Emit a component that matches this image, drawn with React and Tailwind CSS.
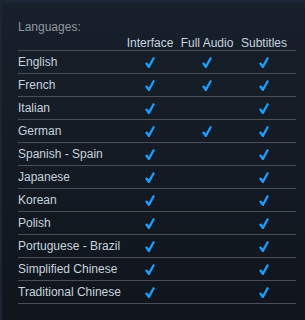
const languages = [
  { name: 'English', ui: true, audio: true, subs: true },
  { name: 'French', ui: true, audio: true, subs: true },
  { name: 'Italian', ui: true, audio: false, subs: true },
  { name: 'German', ui: true, audio: true, subs: true },
  { name: 'Spanish - Spain', ui: true, audio: false, subs: true },
  { name: 'Japanese', ui: true, audio: false, subs: true },
  { name: 'Korean', ui: true, audio: false, subs: true },
  { name: 'Polish', ui: true, audio: false, subs: true },
  { name: 'Portuguese - Brazil', ui: true, audio: false, subs: true },
  { name: 'Simplified Chinese', ui: true, audio: false, subs: true },
  { name: 'Traditional Chinese', ui: true, audio: false, subs: true },
];

function Check({ on }) {
  return (
    <div className="flex items-center justify-center">
      {on && (
        <svg width="10" height="11" viewBox="0 0 10 11" className="mt-[1px]">
          <polygon points="0,6.6 1.9,5.2 3.8,7.4 8.1,0 10,1.1 4.6,11 3.2,11" fill="#1a9fff" />
        </svg>
      )}
    </div>
  );
}

export default function App() {
  return (
    <div className="w-[305px] h-[320px] bg-[#1b2533] pt-[3px] pl-[2px] font-['Liberation_Sans',Arial,sans-serif] text-[12px]">
      <div className="h-full bg-gradient-to-b from-[#17202b] to-[#10151c] pt-[17px] pl-[16px] pr-[9px]">
        <div className="text-[#8f98a0] leading-[14px] h-[14px]">Languages:</div>
        <div className="grid grid-cols-[102px_60px_54px_60px] leading-[14px] mt-[2px] text-[#c6d4df] border-b border-[#4a4f55]">
          <div />
          <div className="text-center">Interface</div>
          <div className="text-center">Full Audio</div>
          <div className="text-center">Subtitles</div>
        </div>
        {languages.map((lang) => (
          <div
            key={lang.name}
            className="grid grid-cols-[102px_60px_54px_60px] h-[23px] items-center text-[#c6d4df] border-b border-[#4a4f55]"
          >
            <div className="whitespace-nowrap">{lang.name}</div>
            <Check on={lang.ui} />
            <Check on={lang.audio} />
            <Check on={lang.subs} />
          </div>
        ))}
      </div>
    </div>
  );
}
